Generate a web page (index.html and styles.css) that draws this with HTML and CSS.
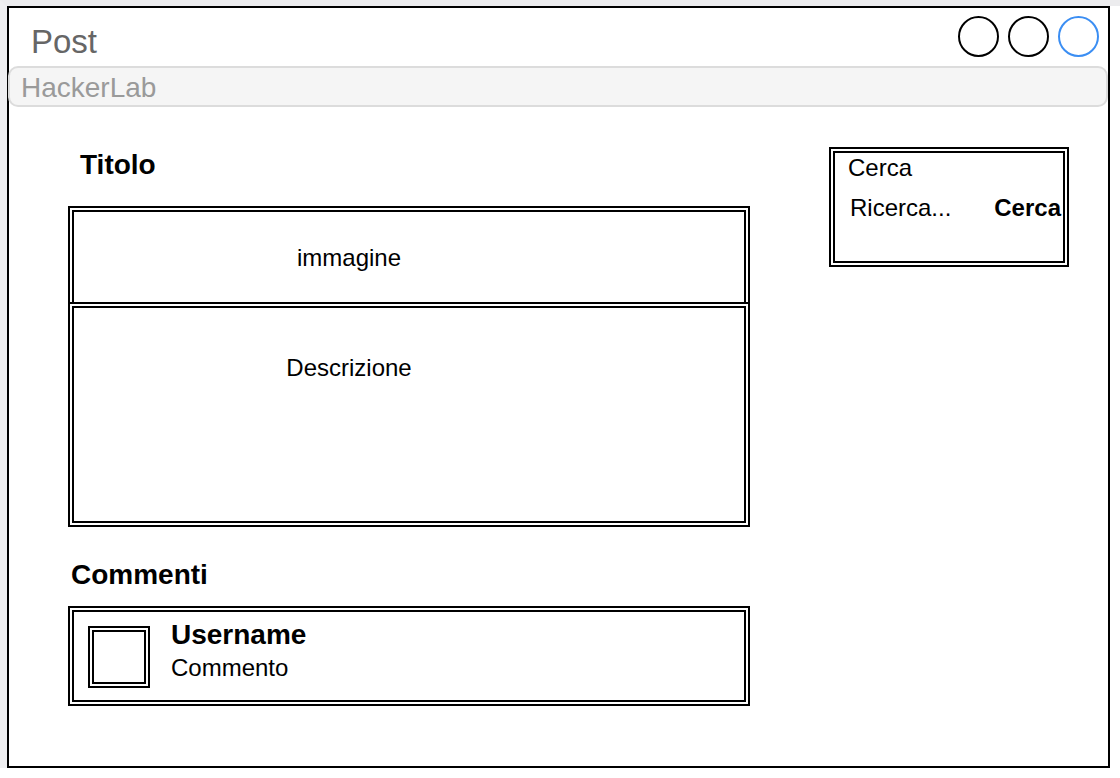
FILE: index.html
```html
<!DOCTYPE html>
<html lang="it">
<head>
<meta charset="utf-8">
<title>Post</title>
<link rel="stylesheet" href="styles.css">
</head>
<body>
<div class="frame">
  <header class="header">
    <div class="title">Post</div>
    <div class="controls">
      <span class="dot"></span>
      <span class="dot"></span>
      <span class="dot dot-blue"></span>
    </div>
  </header>
  <div class="bar">HackerLab</div>
  <main class="content">
    <section class="main-col">
      <h2 class="heading heading-title">Titolo</h2>
      <div class="box image-box">immagine</div>
      <div class="box desc-box">Descrizione</div>
      <h2 class="heading heading-comments">Commenti</h2>
      <div class="box comment">
        <div class="avatar"></div>
        <div class="comment-text">
          <div class="username">Username</div>
          <div class="comment-body">Commento</div>
        </div>
      </div>
    </section>
    <aside class="side-col">
      <div class="box search">
        <div class="search-label">Cerca</div>
        <div class="search-row">
          <span class="search-input">Ricerca...</span>
          <span class="search-btn">Cerca</span>
        </div>
      </div>
    </aside>
  </main>
</div>
</body>
</html>
```

FILE: styles.css
```css
html, body {
  margin: 0;
  padding: 0;
}

body {
  background: #ffffff;
  border-left: 7px solid #efeff1;
  border-top: 6px solid #ececee;
  font-family: "Liberation Sans", Arial, Helvetica, sans-serif;
  color: #000;
}

.frame {
  box-sizing: border-box;
  width: 1103px;
  height: 762px;
  border: 2px solid #000;
  background: #fff;
}

.header {
  display: flex;
  justify-content: space-between;
  align-items: flex-start;
  height: 58px;
}

.title {
  padding-left: 22px;
  padding-top: 18px;
  font-size: 33px;
  line-height: 32px;
  color: #666;
}

.controls {
  display: flex;
  gap: 9px;
  padding-top: 8px;
  padding-right: 9px;
}

.dot {
  box-sizing: border-box;
  width: 41px;
  height: 41px;
  border: 2px solid #000;
  border-radius: 50%;
}

.dot-blue {
  border-color: #3b8ef3;
}

.bar {
  box-sizing: border-box;
  height: 41px;
  margin-left: -1px;
  border: 2px solid #dcdcdc;
  border-radius: 10px;
  background: #f5f5f5;
  color: #9a9a9a;
  font-size: 28px;
  line-height: 35px;
  padding-top: 2px;
  padding-left: 11px;
}

.content {
  display: flex;
  align-items: flex-start;
  gap: 79px;
  padding-left: 59px;
}

.main-col {
  width: 682px;
}

.heading {
  margin: 0;
  font-size: 28px;
  line-height: 32px;
  font-weight: bold;
}

.heading-title {
  margin-top: 42px;
  margin-bottom: 25px;
  padding-left: 12px;
}

.heading-comments {
  margin-top: 32px;
  margin-bottom: 15px;
  padding-left: 3px;
}

.box {
  box-sizing: border-box;
  border: 6px double #000;
}

.image-box,
.desc-box {
  font-size: 24px;
  line-height: 26px;
  text-align: center;
  padding-right: 120px;
}

.image-box {
  height: 96px;
  border-bottom: none;
  padding-top: 33px;
}

.desc-box {
  height: 225px;
  padding-top: 47px;
}

.comment {
  display: flex;
  align-items: flex-start;
  height: 100px;
  padding: 8px 14px;
}

.avatar {
  box-sizing: border-box;
  width: 62px;
  height: 62px;
  margin-top: 6px;
  border: 6px double #000;
  flex: none;
}

.comment-text {
  margin-left: 21px;
}

.username {
  font-size: 28px;
  line-height: 30px;
  font-weight: bold;
}

.comment-body {
  margin-top: 4px;
  font-size: 24px;
  line-height: 28px;
}

.side-col {
  margin-top: 40px;
}

.search {
  width: 240px;
  height: 120px;
  font-size: 24px;
  line-height: 26px;
}

.search-label {
  padding-top: 2px;
  padding-left: 13px;
}

.search-row {
  display: flex;
  justify-content: space-between;
  margin-top: 14px;
  padding-left: 15px;
  padding-right: 2px;
}

.search-btn {
  font-weight: bold;
}
```
